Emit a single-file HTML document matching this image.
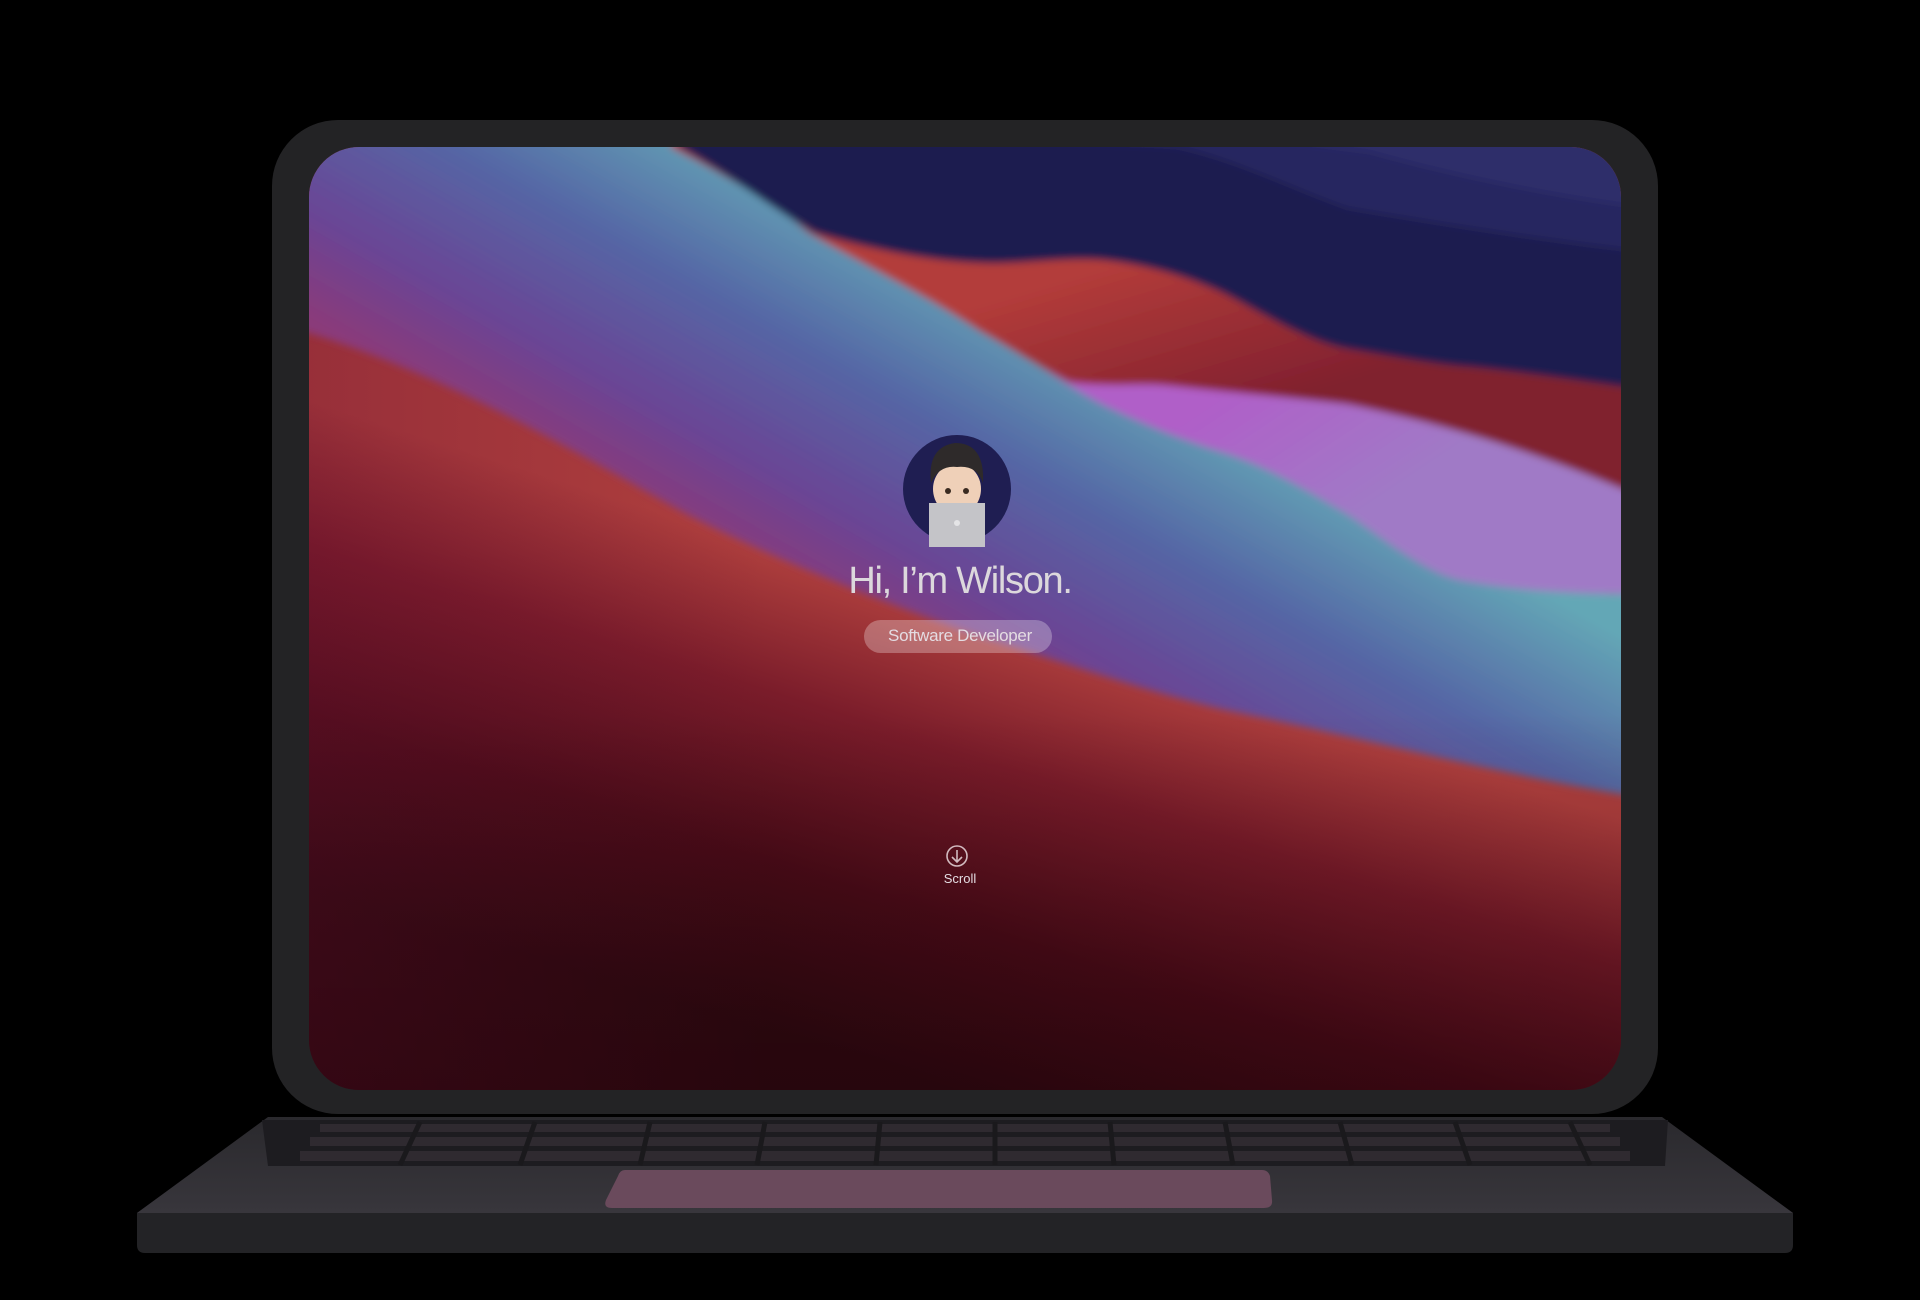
<!DOCTYPE html>
<html><head><meta charset="utf-8"><style>
html,body{margin:0;padding:0;background:#000;width:1920px;height:1300px;overflow:hidden}
.t{position:absolute;left:0;width:1920px;text-align:center;font-family:"Liberation Sans",sans-serif}
</style></head><body>
<svg width="1920" height="1300" viewBox="0 0 1920 1300" style="position:absolute;left:0;top:0">
<defs>
<clipPath id="scr"><rect x="0" y="0" width="1312" height="943" rx="50"/></clipPath>
<linearGradient id="base" gradientUnits="userSpaceOnUse" x1="680" y1="470" x2="540" y2="910">
<stop offset="0" stop-color="#b0403e"/><stop offset="0.3" stop-color="#7a1c2a"/><stop offset="0.65" stop-color="#4a0c18"/><stop offset="1" stop-color="#2c0a10"/></linearGradient>
<linearGradient id="band" gradientUnits="userSpaceOnUse" x1="620" y1="520" x2="800" y2="200">
<stop offset="0" stop-color="#8a3a7a"/><stop offset="0.25" stop-color="#6a4595"/><stop offset="0.6" stop-color="#5566a5"/><stop offset="1" stop-color="#64a7b6"/></linearGradient>
<linearGradient id="lav" gradientUnits="userSpaceOnUse" x1="900" y1="250" x2="1000" y2="400">
<stop offset="0" stop-color="#b05ec8"/><stop offset="1" stop-color="#a07ac6"/></linearGradient>
<linearGradient id="red" gradientUnits="userSpaceOnUse" x1="800" y1="120" x2="850" y2="290">
<stop offset="0" stop-color="#b33c3a"/><stop offset="1" stop-color="#80202e"/></linearGradient>
<linearGradient id="dark" x1="0" y1="0" x2="0" y2="1">
<stop offset="0.6" stop-color="#200008" stop-opacity="0"/><stop offset="1" stop-color="#200008" stop-opacity="0.4"/></linearGradient>
<linearGradient id="lft" x1="0" y1="0" x2="1" y2="0">
<stop offset="0" stop-color="#6a1030" stop-opacity="0.35"/><stop offset="0.35" stop-color="#6a1030" stop-opacity="0"/></linearGradient>
<linearGradient id="deck" x1="0" y1="0" x2="0" y2="1"><stop offset="0" stop-color="#2a292d"/><stop offset="1" stop-color="#38363c"/></linearGradient>
<filter id="bl"><feGaussianBlur stdDeviation="4"/></filter>
</defs>
<path d="M137 1213 L270 1117 L1660 1117 L1793 1213 L1793 1245 Q1793 1253 1785 1253 L145 1253 Q137 1253 137 1245 Z" fill="#232326"/>
<path d="M137 1213 L268 1117 L1662 1117 L1793 1213 Z" fill="url(#deck)"/>
<path d="M262 1120 L1668 1120 L1665 1166 L268 1166 Z" fill="#1d1c20"/>
<g fill="#2f2a30">
<rect x="320" y="1124" width="1290" height="8"/>
<rect x="310" y="1137" width="1310" height="9"/>
<rect x="300" y="1151" width="1330" height="10"/>
</g>
<g stroke="#1a191c" stroke-width="5">
<path d="M420 1122 L400 1165 M535 1122 L520 1165 M650 1122 L640 1165 M765 1122 L757 1165 M880 1122 L876 1165 M995 1122 L995 1165 M1110 1122 L1114 1165 M1225 1122 L1233 1165 M1340 1122 L1352 1165 M1455 1122 L1470 1165 M1570 1122 L1590 1165"/>
</g>
<path d="M625 1170 L1262 1170 Q1268 1170 1270 1176 L1272 1200 Q1273 1208 1264 1208 L612 1208 Q603 1208 606 1200 L618 1176 Q620 1170 625 1170 Z" fill="#6a4a5c"/>
<rect x="272" y="120" width="1386" height="994" rx="66" fill="#232325"/>
<g transform="translate(309,147)" clip-path="url(#scr)">
<rect width="1312" height="943" fill="url(#base)"/>
<rect width="1312" height="943" fill="url(#lft)"/>
<g filter="url(#bl)">
<path d="M-20 -20 L362 -20 L362 0 C420 30 470 60 500 86 C560 120 620 150 671 184 C720 210 760 240 793 257 C840 280 880 295 916 306 C960 320 1000 345 1038 367 C1080 395 1120 430 1161 435 C1220 445 1280 447 1330 447 L1330 650 C1200 630 1050 590 916 563 C820 540 740 510 671 490 C560 450 460 410 377 367 C240 290 120 220 -20 180 Z" fill="url(#band)"/>
<path d="M671 184 C700 200 730 220 760 235 C800 240 830 236 855 238 C920 245 980 250 1038 257 C1150 280 1240 310 1330 349 L1330 447 C1280 447 1220 445 1161 435 C1120 430 1080 395 1038 367 C1000 345 960 320 916 306 C880 295 840 280 793 257 C760 240 720 210 671 184 Z" fill="url(#lav)"/>
<path d="M362 -20 L370 -20 L370 0 C430 35 470 65 505 86 C560 102 620 114 671 116 C710 118 750 110 793 113 C840 118 880 130 916 147 C960 170 1000 195 1038 202 C1100 212 1130 218 1161 220 C1220 226 1280 235 1330 242 L1330 349 C1240 310 1150 280 1038 257 C980 250 920 245 855 238 C830 236 800 240 760 235 C730 220 700 200 671 184 C620 150 560 120 500 86 C470 60 420 30 362 0 Z" fill="url(#red)"/>
<path d="M370 -20 L1330 -20 L1330 242 C1280 235 1220 226 1161 220 C1130 218 1100 212 1038 202 C1000 195 960 170 916 147 C880 130 840 118 793 113 C750 110 710 118 671 116 C620 114 560 102 505 86 C470 65 430 35 370 0 Z" fill="#1f1e50"/>
<path d="M700 -20 L1330 -20 L1330 104 C1250 95 1150 80 1038 61 C980 40 920 10 867 0 C800 -5 750 0 700 -20 Z" fill="#262660"/>
<path d="M867 -20 L1330 -20 L1330 60 C1250 50 1150 30 1060 5 Z" fill="#2d2d6a"/>
</g>
<rect width="1312" height="943" fill="url(#dark)"/>
<circle cx="648" cy="342" r="54" fill="#1f1e52"/>
<ellipse cx="648" cy="342" rx="24" ry="26" fill="#efd0b8"/>
<path d="M622 336 Q618 300 646 296 Q676 296 674 336 Q668 318 648 320 Q630 318 622 336 Z" fill="#2e2a2a"/>
<circle cx="639" cy="344" r="3" fill="#3a2a20"/><circle cx="657" cy="344" r="3" fill="#3a2a20"/>
<path d="M620 356 L676 356 L676 400 L620 400 Z" fill="#c4c4c8"/>
<circle cx="648" cy="376" r="3" fill="#e4e4e6"/>
</g>
<circle cx="957" cy="856" r="10" fill="none" stroke="#e8d8dc" stroke-width="1.6" opacity="0.85"/>
<path d="M957 850 L957 862 M952 857 L957 862 L962 857" fill="none" stroke="#e8d8dc" stroke-width="1.6" opacity="0.85"/>
<rect x="864" y="620" width="188" height="33" rx="16.5" fill="#ffffff" fill-opacity="0.28"/>
</svg>
<div class="t" style="top:560px;font-size:38px;color:#dcd8dc;letter-spacing:-1.3px">Hi, I’m Wilson.</div>
<div class="t" style="top:626px;font-size:17px;color:#e4dce2;letter-spacing:-0.3px">Software Developer</div>
<div class="t" style="top:871px;font-size:13px;color:#e4dce2">Scroll</div>
</body></html>
